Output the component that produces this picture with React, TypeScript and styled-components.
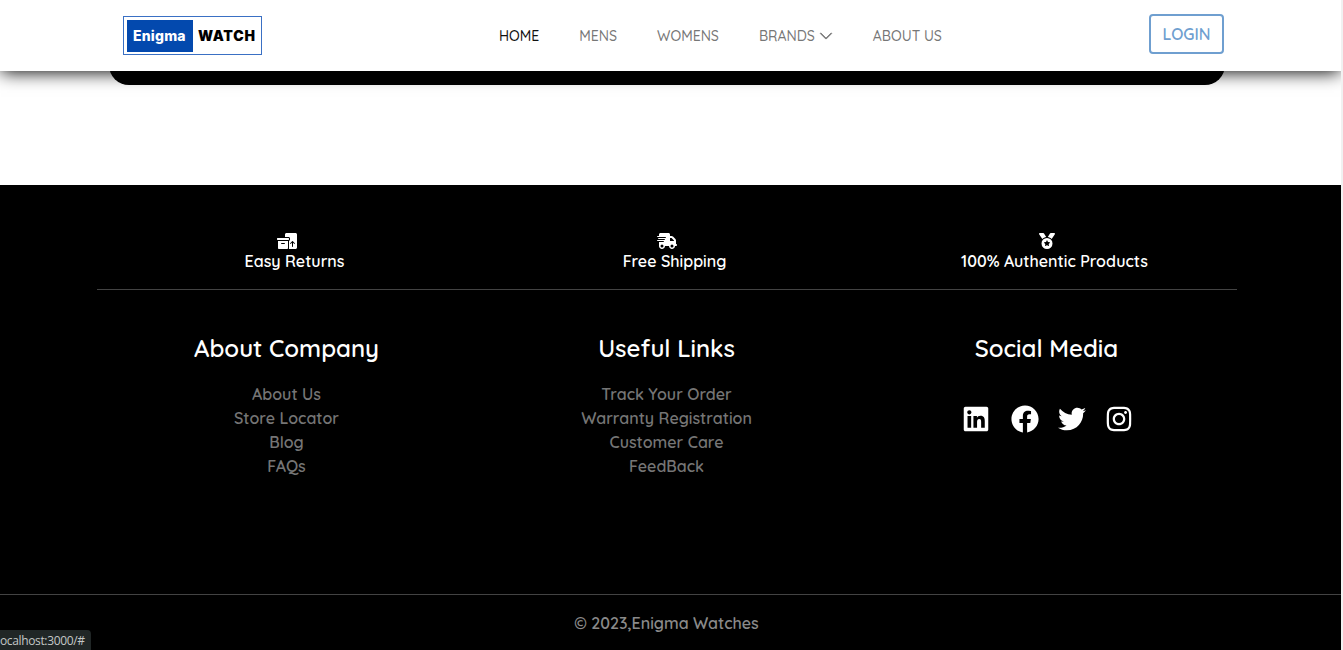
import React from 'react';
import styled, { createGlobalStyle } from 'styled-components';
import {
  FaBoxesPacking,
  FaInstagram,
  FaLinkedin,
  FaMedal,
  FaTruckFast,
  FaTwitter,
} from 'react-icons/fa6';
import { FaFacebook } from 'react-icons/fa';
import { BsChevronDown } from 'react-icons/bs';

const GlobalStyle = createGlobalStyle`
  * { box-sizing: border-box; }
  body {
    margin: 0;
    background: #fff;
    font-family: Quicksand, Lato, sans-serif;
    font-size: 16px;
    font-weight: 600;
    line-height: 24px;
    overflow: hidden;
  }
  a { color: inherit; text-decoration: none; }
`;

const Window = styled.div`
  display: flex;
  height: 650px;
  background: #f1f1f1;
`;

const Page = styled.div`
  position: relative;
  display: flex;
  flex-direction: column;
  width: 1341px;
  background: #fff;
  overflow: hidden;
`;

const Header = styled.header`
  position: relative;
  z-index: 1;
  display: grid;
  grid-template-columns: 376px 1fr 75px;
  align-items: center;
  height: 71px;
  padding: 0 117px 3px 123px;
  background: #fff;
  box-shadow: 0 2px 17px -1px #000;
`;

const Logo = styled.a`
  display: flex;
  align-items: center;
  width: 139px;
  height: 39px;
  margin-top: 3px;
  padding: 3px;
  border: 1px solid #3a70c4;
  font-family: Inter, sans-serif;
  font-size: 14px;
  line-height: 31px;
`;

const LogoMark = styled.span`
  width: 66px;
  height: 32px;
  padding-left: 6px;
  background: #0349ae;
  color: #fff;
  font-weight: 800;
  letter-spacing: 0.2px;
`;

const LogoWord = styled.span`
  padding-left: 5px;
  color: #000;
  font-weight: 900;
  letter-spacing: 0.75px;
`;

const Nav = styled.nav`
  display: flex;
  gap: 40px;
  padding-top: 3px;
  font-size: 14px;
  font-weight: 500;
`;

const NavItem = styled.a<{ $active?: boolean }>`
  display: flex;
  align-items: center;
  gap: 4px;
  color: ${(p) => (p.$active ? '#111' : '#777')};
  white-space: nowrap;
`;

const LoginButton = styled.button`
  width: 75px;
  height: 40px;
  padding: 0;
  border: 2px solid #6f9fd0;
  border-radius: 4px;
  background: transparent;
  color: #6f9fd0;
  font: 600 16px/24px Quicksand, Lato, sans-serif;
`;

const Banner = styled.div`
  flex: none;
  height: 44px;
  margin: -30px 116px 100px 109px;
  border-radius: 20px;
  background: #020202;
`;

const Footer = styled.footer`
  flex: 1;
  display: flex;
  flex-direction: column;
  background: #000;
  text-align: center;
`;

const Columns = styled.div`
  display: grid;
  grid-template-columns: repeat(3, 380px);
  width: 1140px;
  margin-left: 96.5px;
`;

const Services = styled(Columns)`
  height: 105px;
  padding-top: 48px;
  border-bottom: 1px solid #434343;
`;

const Service = styled.div`
  display: flex;
  flex-direction: column;
  align-items: center;
  color: #fff;
`;

const ServiceLabel = styled.span`
  padding-left: 16px;
`;

const ServiceIcon = styled.i<{ $width: number }>`
  display: block;
  height: 16px;

  svg {
    display: block;
    width: ${(p) => p.$width}px;
    height: 16px;
  }
`;

const LinkColumns = styled(Columns)`
  height: 304px;
  padding-top: 44px;
`;

const Column = styled.section`
  display: flex;
  flex-direction: column;
  align-items: center;
`;

const Heading = styled.h4`
  margin: 0 0 19px;
  color: #fff;
  font-size: 24px;
  font-weight: 600;
  line-height: 29px;
`;

const FooterLink = styled.a`
  color: #757575;
`;

const Socials = styled.div`
  display: flex;
  align-items: center;
  gap: 19px;
  margin-top: 23px;
  padding-left: 2px;
  color: #fff;

  svg { display: block; height: 28px; width: auto; }
  svg:first-child { margin-right: 2px; }
`;

const Copyright = styled.div`
  flex: 1;
  padding: 16px 8px 0 0;
  border-top: 1px solid #434343;
  color: #8a8a8a;
`;

const StatusBubble = styled.div`
  position: absolute;
  left: 0;
  bottom: 0;
  width: 91px;
  height: 20px;
  border-radius: 0 4px 0 0;
  background: #202626;
  color: #c3c7c7;
  font: 12px/21px "Open Sans", sans-serif;
  letter-spacing: -0.36px;
`;

const navItems = [
  { label: 'HOME', active: true },
  { label: 'MENS' },
  { label: 'WOMENS' },
  { label: 'BRANDS', menu: true },
  { label: 'ABOUT US' },
];

const services = [
  { label: 'Easy Returns', icon: <FaBoxesPacking />, width: 20 },
  { label: 'Free Shipping', icon: <FaTruckFast />, width: 20 },
  { label: '100% Authentic Products', icon: <FaMedal />, width: 16 },
];

const linkGroups = [
  { title: 'About Company', links: ['About Us', 'Store Locator', 'Blog', 'FAQs'] },
  {
    title: 'Useful Links',
    links: ['Track Your Order', 'Warranty Registration', 'Customer Care', 'FeedBack'],
  },
];

export default function App() {
  return (
    <Window>
      <GlobalStyle />
      <Page>
        <Header>
          <Logo href="#">
            <LogoMark>Enigma</LogoMark>
            <LogoWord>WATCH</LogoWord>
          </Logo>
          <Nav>
            {navItems.map((item) => (
              <NavItem key={item.label} href="#" $active={item.active}>
                {item.label}
                {item.menu && <BsChevronDown size={14} strokeWidth={0.8} />}
              </NavItem>
            ))}
          </Nav>
          <LoginButton>LOGIN</LoginButton>
        </Header>
        <Banner />
        <Footer>
          <Services>
            {services.map((s) => (
              <Service key={s.label}>
                <ServiceIcon $width={s.width}>{s.icon}</ServiceIcon>
                <ServiceLabel>{s.label}</ServiceLabel>
              </Service>
            ))}
          </Services>
          <LinkColumns>
            {linkGroups.map((group) => (
              <Column key={group.title}>
                <Heading>{group.title}</Heading>
                {group.links.map((label) => (
                  <FooterLink key={label} href="#">
                    {label}
                  </FooterLink>
                ))}
              </Column>
            ))}
            <Column>
              <Heading>Social Media</Heading>
              <Socials>
                <FaLinkedin />
                <FaFacebook />
                <FaTwitter />
                <FaInstagram />
              </Socials>
            </Column>
          </LinkColumns>
          <Copyright>© 2023,Enigma Watches</Copyright>
        </Footer>
        <StatusBubble>ocalhost:3000/#</StatusBubble>
      </Page>
    </Window>
  );
}
